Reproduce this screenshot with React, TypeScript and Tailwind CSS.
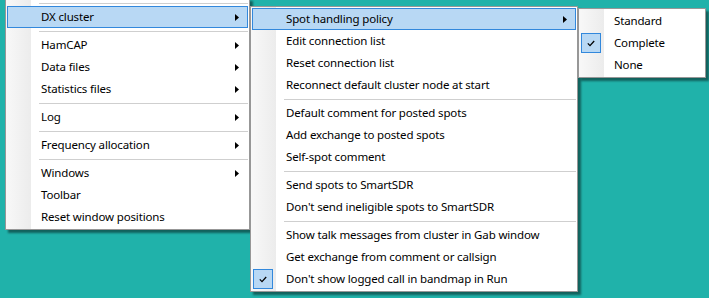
import React from 'react'

type Entry =
  | { kind: 'sep' }
  | { kind: 'item'; label: string; sub?: boolean; active?: boolean; checked?: boolean }

const FONT = { fontFamily: '"Noto Sans", "Liberation Sans", sans-serif' }

const leftItems: Entry[] = [
  { kind: 'sep' },
  { kind: 'item', label: 'DX cluster', sub: true, active: true },
  { kind: 'sep' },
  { kind: 'item', label: 'HamCAP', sub: true },
  { kind: 'item', label: 'Data files', sub: true },
  { kind: 'item', label: 'Statistics files', sub: true },
  { kind: 'sep' },
  { kind: 'item', label: 'Log', sub: true },
  { kind: 'sep' },
  { kind: 'item', label: 'Frequency allocation', sub: true },
  { kind: 'sep' },
  { kind: 'item', label: 'Windows', sub: true },
  { kind: 'item', label: 'Toolbar' },
  { kind: 'item', label: 'Reset window positions' },
]

const clusterItems: Entry[] = [
  { kind: 'item', label: 'Spot handling policy', sub: true, active: true },
  { kind: 'item', label: 'Edit connection list' },
  { kind: 'item', label: 'Reset connection list' },
  { kind: 'item', label: 'Reconnect default cluster node at start' },
  { kind: 'sep' },
  { kind: 'item', label: 'Default comment for posted spots' },
  { kind: 'item', label: 'Add exchange to posted spots' },
  { kind: 'item', label: 'Self-spot comment' },
  { kind: 'sep' },
  { kind: 'item', label: 'Send spots to SmartSDR' },
  { kind: 'item', label: "Don't send ineligible spots to SmartSDR" },
  { kind: 'sep' },
  { kind: 'item', label: 'Show talk messages from cluster in Gab window' },
  { kind: 'item', label: 'Get exchange from comment or callsign' },
  { kind: 'item', label: "Don't show logged call in bandmap in Run", checked: true },
]

const policyItems: Entry[] = [
  { kind: 'item', label: 'Standard' },
  { kind: 'item', label: 'Complete', checked: true },
  { kind: 'item', label: 'None' },
]

function Arrow() {
  return (
    <svg width="4" height="7" viewBox="0 0 4 7" className="absolute right-[8px] top-[7px]">
      <path d="M0 0 L4 3.5 L0 7 Z" fill="#000" />
    </svg>
  )
}

function Check() {
  return (
    <div className="absolute left-0 top-0 w-[20px] h-[20px] border border-[#3288dc] bg-[#b8d8f4] flex items-center justify-center">
      <svg width="8" height="7" viewBox="0 0 8 7">
        <path d="M0.8 3.4 L3 5.6 L7.2 1" stroke="#000" strokeWidth="1.3" fill="none" />
      </svg>
    </div>
  )
}

/** One Win32-style popup menu with gutter, separators and highlight */
function Menu({ items, className }: { items: Entry[]; className: string }) {
  return (
    <div
      className={`absolute bg-white border border-[#979797] p-[1px] shadow-[3px_3px_2px_rgba(0,0,0,0.45)] ${className}`}
      style={FONT}
    >
      {/* gutter */}
      <div className="absolute left-0 top-0 bottom-0 w-[25px] bg-gradient-to-r from-[#f8f8f8] to-[#ececec]" />
      <div className="relative flex flex-col">
        {items.map((it, i) =>
          it.kind === 'sep' ? (
            <div key={i} className="h-[6px] flex items-center pl-[32px]">
              <div className="h-px w-full bg-[#cfcfcf]" />
            </div>
          ) : (
            <div
              key={i}
              className={`relative h-[22px] border pl-[33px] text-[11.5px] tracking-[-0.15px] leading-[20px] text-black whitespace-nowrap ${
                it.active ? 'bg-[#b8d8f4] border-[#3288dc]' : 'border-transparent'
              }`}
            >
              {it.checked && <Check />}
              {it.label}
              {it.sub && <Arrow />}
            </div>
          )
        )}
      </div>
    </div>
  )
}

export default function App() {
  return (
    <div className="relative w-[709px] h-[298px] overflow-hidden bg-[#20b2aa]">
      <Menu items={leftItems} className="left-[5px] top-[-2px] w-[245px]" />
      <Menu items={clusterItems} className="left-[250px] top-[6px] w-[328px]" />
      <Menu items={policyItems} className="left-[578px] top-[8px] w-[128px]" />
    </div>
  )
}
